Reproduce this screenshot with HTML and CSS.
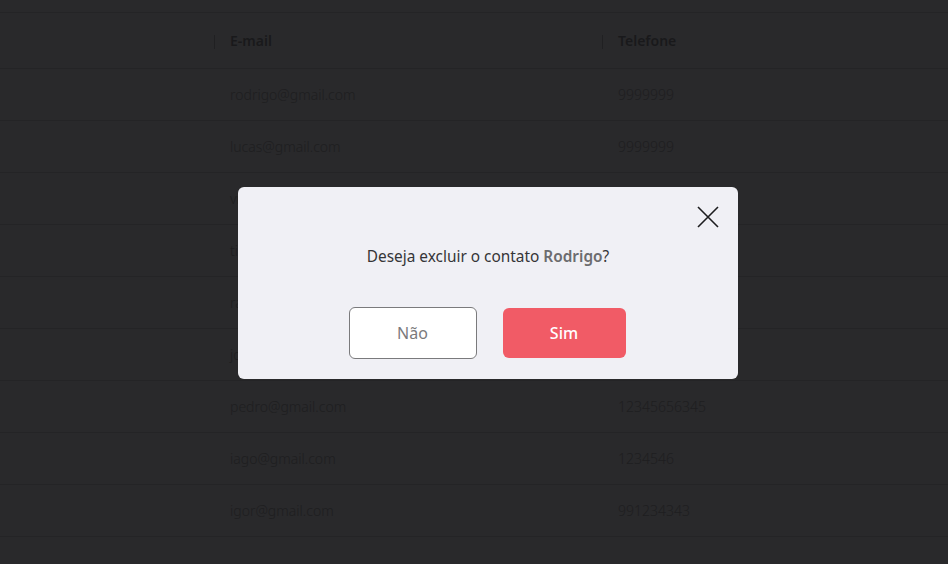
FILE: index.html
```html
<!DOCTYPE html>
<html lang="pt-BR">
<head>
<meta charset="utf-8">
<title>Contatos</title>
<link rel="stylesheet" href="styles.css">
</head>
<body>
<main class="page">
  <table class="contacts">
    <thead>
      <tr>
        <th class="col-name"></th>
        <th class="col-email"><span class="sep"></span>E-mail</th>
        <th class="col-phone"><span class="sep"></span>Telefone</th>
      </tr>
    </thead>
    <tbody>
      <tr><td></td><td>rodrigo@gmail.com</td><td>9999999</td></tr>
      <tr><td></td><td>lucas@gmail.com</td><td>9999999</td></tr>
      <tr><td></td><td>vitor@gmail.com</td><td>99887766</td></tr>
      <tr><td></td><td>tiago@gmail.com</td><td>12345678</td></tr>
      <tr><td></td><td>rafael@gmail.com</td><td>98765432</td></tr>
      <tr><td></td><td>joao@gmail.com</td><td>11223344</td></tr>
      <tr><td></td><td>pedro@gmail.com</td><td>12345656345</td></tr>
      <tr><td></td><td>iago@gmail.com</td><td>1234546</td></tr>
      <tr><td></td><td>igor@gmail.com</td><td>991234343</td></tr>
    </tbody>
  </table>
</main>

<div class="backdrop">
  <div class="modal" role="dialog">
    <button class="close" aria-label="Fechar">
      <svg width="22" height="22" viewBox="0 0 22 22"><path d="M1 1 L21 21 M21 1 L1 21" stroke="#1d1d1f" stroke-width="1.6" fill="none"/></svg>
    </button>
    <p class="question">Deseja excluir o contato <strong>Rodrigo</strong>?</p>
    <div class="actions">
      <button class="btn btn-no">Não</button>
      <button class="btn btn-yes">Sim</button>
    </div>
  </div>
</div>
</body>
</html>
```

FILE: styles.css
```css
* { box-sizing: border-box; }
html, body { margin: 0; padding: 0; }
body {
  background: #29292b;
  font-family: "Noto Sans", "Open Sans", sans-serif;
  width: 948px;
  height: 564px;
  overflow: hidden;
}
.page { padding-top: 12px; }
.contacts {
  width: 100%;
  border-collapse: collapse;
  table-layout: fixed;
}
.contacts th, .contacts td {
  text-align: left;
  padding: 0 0 0 16px;
  border-top: 1px solid #242426;
  border-bottom: 1px solid #242426;
  white-space: nowrap;
}
.contacts th {
  height: 56px;
  font-size: 14px;
  font-weight: 600;
  color: #19191b;
  position: relative;
}
.contacts td {
  height: 52px;
  font-size: 14px;
  font-weight: 300;
  color: #1e1e20;
}
.col-name { width: 214px; }
.col-email { width: 388px; }
.sep {
  position: absolute;
  left: 0;
  top: 22px;
  width: 1px;
  height: 14px;
  background: #202022;
}
.backdrop {
  position: fixed;
  inset: 0;
  display: flex;
  align-items: center;
  justify-content: center;
  padding-left: 28px;
  padding-top: 2px;
}
.modal {
  position: relative;
  width: 500px;
  height: 192px;
  background: #f0f0f5;
  border-radius: 6px;
  display: flex;
  flex-direction: column;
  align-items: center;
  padding-top: 58px;
}
.close {
  position: absolute;
  right: 19px;
  top: 19px;
  width: 22px;
  height: 22px;
  padding: 0;
  border: 0;
  background: none;
  display: flex;
}
.question {
  margin: 0;
  font-size: 15.4px;
  line-height: 24px;
  color: #353537;
}
.question strong {
  font-weight: 600;
  color: #6c6c6e;
}
.actions {
  display: flex;
  gap: 26px;
  margin-top: 38px;
  margin-right: 2px;
  align-items: center;
}
.btn {
  font-family: "Noto Sans", "Open Sans", sans-serif;
  font-size: 16px;
  border-radius: 6px;
  cursor: pointer;
}
.btn-no {
  width: 128px;
  height: 52px;
  background: #ffffff;
  border: 1px solid #7a7a7c;
  color: #7a7a7c;
}
.btn-yes {
  width: 123px;
  height: 50px;
  background: #f15b66;
  border: 0;
  color: #ffffff;
  font-weight: 500;
}
```
